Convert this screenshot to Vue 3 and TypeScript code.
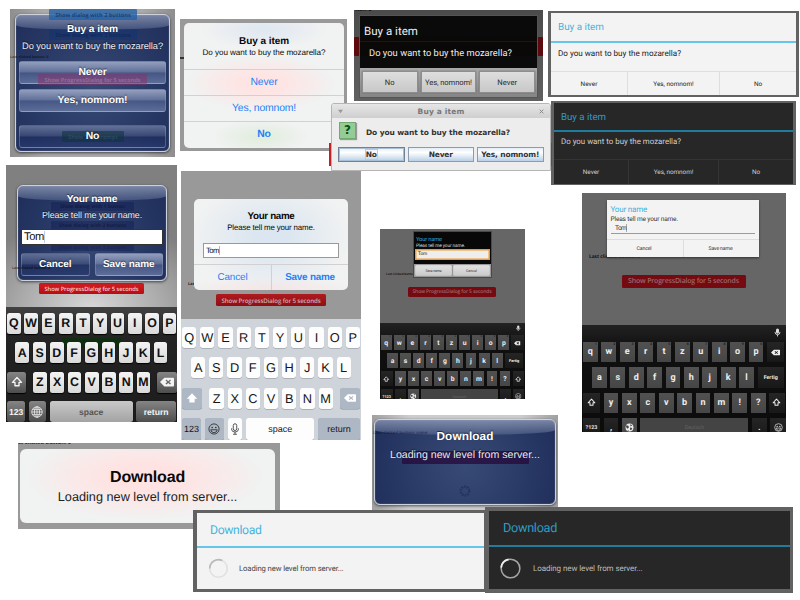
<script setup lang="ts">
import type { Directive } from 'vue'

type Key = { t?: string; icon?: string; c?: string; w?: number; ml?: number; hint?: string }
type Row = { left: number; keys: Key[] }
type Board = { name: string; kw: number; rows: Row[] }

// Tracks a label out or in until it is exactly the given width.
const vFit: Directive<HTMLElement, number> = {
  mounted(el, { value }) {
    const n = (el.textContent ?? '').length
    const current = el.getBoundingClientRect().width
    if (n > 1) {
      el.style.letterSpacing = `${(value - current) / n}px`
    }
  },
}

const letters = (s: string): Key[] => s.split('').map((t) => ({ t }))

const ios6: Board = {
  name: 'ios6',
  kw: 13.7,
  rows: [
    { left: 1, keys: letters('QWERTYUIOP') },
    { left: 9.4, keys: letters('ASDFGHJKL') },
    {
      left: 1,
      keys: [
        { icon: 'shift-line', c: 'fn', w: 19.4 },
        { t: 'Z', ml: 3 },
        ...letters('XCVBNM'),
        { icon: 'erase', c: 'fn', w: 19.6, ml: 3 },
      ],
    },
    {
      left: 1,
      keys: [
        { t: '123', c: 'fn small', w: 18.4 },
        { icon: 'globe', c: 'fn', w: 17 },
        { t: 'space', c: 'space small', w: 83 },
        { t: 'return', c: 'fn small', w: 39.8 },
      ],
    },
  ],
}

const ios7: Board = {
  name: 'ios7',
  kw: 14.3,
  rows: [
    { left: 1, keys: letters('QWERTYUIOP') },
    { left: 10, keys: letters('ASDFGHJKL') },
    {
      left: 1,
      keys: [
        { icon: 'shift-solid', c: 'fn', w: 20 },
        { t: 'Z', ml: 3.5 },
        ...letters('XCVBNM'),
        { icon: 'erase', c: 'fn', w: 20, ml: 3.3 },
      ],
    },
    {
      left: 1,
      keys: [
        { t: '123', c: 'fn small', w: 19 },
        { icon: 'smile', c: 'fn dark', w: 19 },
        { icon: 'mic-line', c: 'dark', w: 14.6 },
        { t: 'space', c: 'small', w: 68.2 },
        { t: 'return', c: 'fn small', w: 41.5 },
      ],
    },
  ],
}

const hinted = 'qwertzuiop'.split('').map((t, i): Key => ({ t, hint: String((i + 1) % 10) }))

const android = (name: string, kw: number, k: number): Board => ({
  name,
  kw,
  rows: [
    { left: k, keys: [...hinted, { icon: 'erase', c: 'fn', w: 17.3 * k }] },
    { left: 10 * k, keys: [...letters('asdfghjkl'), { t: 'Fertig', c: 'fn small', w: 26.3 * k }] },
    {
      left: k,
      keys: [
        { icon: 'shift-line', c: 'fn', w: 17 * k },
        ...letters('yxcvbnm!?'),
        { icon: 'shift-line', c: 'fn', w: 15.7 * k },
      ],
    },
    {
      left: k,
      keys: [
        { t: '?123', c: 'fn small', w: 17 * k },
        { t: ',', c: 'fn' },
        { icon: 'globe-solid' },
        { t: 'Deutsch', c: 'space small', w: 108 * k },
        { t: '.', c: 'fn' },
        { icon: 'smile', c: 'fn', w: 15.7 * k },
      ],
    },
  ],
})

const boards: Record<string, Board> = {
  ios6,
  ios7,
  tablet: android('tablet', 14.8, 1),
  mini: android('mini', 10.9, 0.71),
}
const shots = [
  { board: boards.ios6, cls: 'ask-ios6' },
  { board: boards.ios7, cls: 'ask-ios7' },
  { board: boards.mini, cls: 'ask-mini' },
  { board: boards.tablet, cls: 'ask-tablet' },
]
</script>

<template>
  <main class="canvas">
    <svg class="sprite" width="0" height="0">
      <symbol id="shift-line" viewBox="0 0 16 16">
        <path d="M8 2 14 8.5H10.7V13H5.3V8.5H2Z" fill="none" stroke="currentColor" stroke-width="1.8" stroke-linejoin="round" />
      </symbol>
      <symbol id="shift-solid" viewBox="0 0 16 16">
        <path d="M8 1.5 15 9H11.5V14H4.5V9H1Z" fill="currentColor" />
      </symbol>
      <symbol id="erase" viewBox="0 0 16 16">
        <path fill-rule="evenodd" d="M5 3H15Q16 3 16 4V12Q16 13 15 13H5L0 8ZM7.3 5.2 6.3 6.2 8.2 8 6.3 9.8 7.3 10.8 9.5 9 11.5 10.8 12.5 9.8 10.6 8 12.5 6.2 11.5 5.2 9.5 7Z" fill="currentColor" />
      </symbol>
      <symbol id="globe" viewBox="0 0 16 16">
        <g fill="none" stroke="currentColor" stroke-width="1">
          <circle cx="8" cy="8" r="7" /><ellipse cx="8" cy="8" rx="3.4" ry="7" />
          <path d="M8 1V15M1 8H15M2 4.5H14M2 11.5H14" />
        </g>
      </symbol>
      <symbol id="globe-solid" viewBox="0 0 16 16">
        <circle cx="8" cy="8" r="7" fill="currentColor" />
        <path d="M2 4 6 5 7 8 4 10 2 7ZM9 2 13 4 10 6ZM9 8 13 9 11 13 9 12ZM5 12 7 14H5Z" fill="#444" />
      </symbol>
      <symbol id="smile" viewBox="0 0 16 16">
        <circle cx="8" cy="8" r="6.8" fill="none" stroke="currentColor" stroke-width="1.2" />
        <circle cx="5.6" cy="6" r="1.1" fill="currentColor" /><circle cx="10.4" cy="6" r="1.1" fill="currentColor" />
        <path d="M3.6 9H12.4Q11.5 13 8 13T3.6 9Z" fill="none" stroke="currentColor" stroke-width="1.2" />
      </symbol>
      <symbol id="mic-line" viewBox="0 0 16 16">
        <g fill="none" stroke="currentColor" stroke-width="1.1">
          <rect x="5.7" y="1" width="4.6" height="9" rx="2.3" /><path d="M3.6 7V9Q4 12 8 12T12.4 9V7M8 12V15M5.5 15H10.5" />
        </g>
      </symbol>
      <symbol id="mic" viewBox="0 0 16 16">
        <rect x="5.3" y="1" width="5.4" height="9" rx="2.7" fill="currentColor" />
        <path d="M3.5 7Q4 12 8 12T12.5 7M8 12V15" fill="none" stroke="currentColor" stroke-width="1.6" />
      </symbol>
    </svg>

    <!-- Confirm dialogs -->
    <section class="shot buy-ios6">
      <i class="ghost g1">Show dialog with 2 buttons</i>
      <i class="ghost g2">Show dialog with 3 buttons</i>
      <i class="ghost g3">Show ProgressDialog for 5 seconds</i>
      <i class="ghost g4">Show TextPrompt</i>
      <i class="ghost last">Last clicked button: 0</i>
      <div class="glass">
        <h2><span v-fit="51">Buy a item</span></h2>
        <p><span v-fit="141">Do you want to buy the mozarella?</span></p>
        <div class="gbtn"><span v-fit="28">Never</span></div>
        <div class="gbtn"><span v-fit="70">Yes, nomnom!</span></div>
        <div class="gbtn dim"><span v-fit="13.5">No</span></div>
      </div>
    </section>

    <section class="shot buy-ios7">
      <i class="mark"></i>
      <div class="frost">
        <h2><span v-fit="50">Buy a item</span></h2>
        <p><span v-fit="123">Do you want to buy the mozarella?</span></p>
        <div class="link"><span v-fit="27">Never</span></div>
        <div class="link"><span v-fit="64">Yes, nomnom!</span></div>
        <div class="link strong"><span v-fit="13.5">No</span></div>
      </div>
    </section>

    <section class="shot buy-old">
      <i class="ghost stub">tton: 2</i>
      <i class="ghost band">Show ProgressDialog for 5 seconds</i>
      <div class="old">
        <h2><span v-fit="54">Buy a item</span></h2>
        <p><span v-fit="143">Do you want to buy the mozarella?</span></p>
        <div class="bar">
          <b><span v-fit="10">No</span></b>
          <b><span v-fit="47">Yes, nomnom!</span></b>
          <b><span v-fit="20">Never</span></b>
        </div>
      </div>
    </section>

    <section class="shot buy-light holo">
      <h2><span v-fit="46">Buy a item</span></h2>
      <p><span v-fit="123">Do you want to buy the mozarella?</span></p>
      <div class="bar">
        <b><span v-fit="17">Never</span></b>
        <b><span v-fit="40.5">Yes, nomnom!</span></b>
        <b><span v-fit="8">No</span></b>
      </div>
    </section>

    <section class="shot buy-dark holo night">
      <h2><span v-fit="45">Buy a item</span></h2>
      <p><span v-fit="120">Do you want to buy the mozarella?</span></p>
      <div class="bar">
        <b><span v-fit="16.5">Never</span></b>
        <b><span v-fit="39.5">Yes, nomnom!</span></b>
        <b><span v-fit="8">No</span></b>
      </div>
    </section>
    <i class="shot redline"></i>

    <!-- Text prompts -->
    <section v-for="s in shots" :key="s.cls" class="shot" :class="s.cls">
      <template v-if="s.cls === 'ask-ios6'">
        <i class="ghost g1">Show dialog with 1 button</i>
        <i class="ghost g2">Show dialog with 2 buttons</i>
        <i class="ghost g3">Show dialog with 3 buttons</i>
        <i class="ghost last">Last clicked button: 0</i>
        <div class="glass">
          <h2><span v-fit="50.5">Your name</span></h2>
          <p><span v-fit="100">Please tell me your name.</span></p>
          <div class="field"><span v-fit="21">Tom</span></div>
          <div class="pair">
            <div class="gbtn dim"><span v-fit="32.5">Cancel</span></div>
            <div class="gbtn"><span v-fit="51.5">Save name</span></div>
          </div>
        </div>
        <div class="red"><span v-fit="94">Show ProgressDialog for 5 seconds</span></div>
      </template>
      <template v-else-if="s.cls === 'ask-ios7'">
        <i class="ghost last">Last</i>
        <div class="frost">
          <h2><span v-fit="47">Your name</span></h2>
          <p><span v-fit="87.5">Please tell me your name.</span></p>
          <div class="field"><span v-fit="14">Tom</span></div>
          <div class="pair">
            <div class="link"><span v-fit="30">Cancel</span></div>
            <div class="link strong"><span v-fit="49.5">Save name</span></div>
          </div>
        </div>
        <div class="red"><span v-fit="99">Show ProgressDialog for 5 seconds</span></div>
      </template>
      <template v-else-if="s.cls === 'ask-mini'">
        <i class="ghost last">Last clicked button: 0</i>
        <div class="old">
          <h2><span v-fit="26">Your name</span></h2>
          <p><span v-fit="49">Pleas tell me your name.</span></p>
          <div class="field"><span v-fit="9">Tom</span></div>
          <div class="bar">
            <b><span v-fit="16">Save name</span></b>
            <b><span v-fit="11">Cancel</span></b>
          </div>
        </div>
        <div class="red"><span v-fit="79">Show ProgressDialog for 5 seconds</span></div>
      </template>
      <template v-else>
        <i class="ghost last">Last clicked button: 0</i>
        <div class="holo-box">
          <h2><span v-fit="36.5">Your name</span></h2>
          <p><span v-fit="67.5">Pleas tell me your name.</span></p>
          <div class="field"><span v-fit="12">Tom</span></div>
          <div class="bar">
            <b><span v-fit="15">Cancel</span></b>
            <b><span v-fit="24">Save name</span></b>
          </div>
        </div>
        <div class="red"><span v-fit="111">Show ProgressDialog for 5 seconds</span></div>
      </template>

      <div class="kb" :class="s.board.name">
        <div v-if="s.cls === 'ask-mini' || s.cls === 'ask-tablet'" class="hintbar">
          <svg><use href="#mic" /></svg>
        </div>
        <i v-if="s.cls === 'ask-ios6'" class="greenghost"></i>
        <div v-for="(r, ri) in s.board.rows" :key="ri" class="row" :style="{ paddingLeft: r.left + 'px' }">
          <div
            v-for="(k, ki) in r.keys"
            :key="ki"
            class="key"
            :class="k.c"
            :style="{ width: (k.w ?? s.board.kw) + 'px', marginLeft: (k.ml ?? 0) + 'px' }"
          >
            <svg v-if="k.icon" :class="k.icon"><use :href="'#' + k.icon" /></svg>
            <template v-else>{{ k.t }}</template>
            <sup v-if="k.hint">{{ k.hint }}</sup>
          </div>
        </div>
      </div>
    </section>

    <!-- Progress dialogs -->
    <section class="shot load-ios7">
      <i class="ghost stub">st clicked button: 0</i>
      <div class="frost">
        <h2><span v-fit="75">Download</span></h2>
        <p><span v-fit="179.5">Loading new level from server...</span></p>
      </div>
    </section>

    <section class="shot load-ios6">
      <i class="ghost band"></i>
      <i class="ghost last">Last clicked button: none</i>
      <div class="glass">
        <h2><span v-fit="57">Download</span></h2>
        <p><span v-fit="150">Loading new level from server...</span></p>
        <svg class="dots" viewBox="0 0 12 12"><circle cx="6" cy="6" r="4.3" /></svg>
      </div>
    </section>

    <section class="shot load-light holo">
      <h2><span v-fit="51.5">Download</span></h2>
      <div class="wait">
        <svg viewBox="0 0 22 22">
          <circle cx="11" cy="11" r="9.2" fill="none" stroke="#e0e0e0" stroke-width="1.7" />
          <path d="M1.8 11A9.2 9.2 0 0 1 15 2.7" fill="none" stroke="#b9b9b9" stroke-width="1.7" />
        </svg>
        <span v-fit="104.5">Loading new level from server...</span>
      </div>
    </section>

    <section class="shot load-dark holo night">
      <h2><span v-fit="54">Download</span></h2>
      <div class="wait">
        <svg viewBox="0 0 22 22">
          <circle cx="11" cy="11" r="9.8" fill="none" stroke="#a5a5a5" stroke-width="1.6" />
          <path d="M1.2 10A9.8 9.8 0 0 1 9 1.4" fill="none" stroke="#eee" stroke-width="1.7" />
        </svg>
        <span v-fit="109.5">Loading new level from server...</span>
      </div>
    </section>

    <section class="shot swing">
      <header>
        <svg viewBox="0 0 6 4"><path d="M0 0H6L3 4Z" fill="#999" /></svg>
        <span v-fit="47">Buy a item</span>
        <svg viewBox="0 0 6 6"><path d="M.8.8 5.2 5.2M5.2.8.8 5.2" stroke="#888" stroke-width="1.2" /></svg>
      </header>
      <div class="ask"><em>?</em><span v-fit="144">Do you want to buy the mozarella?</span></div>
      <div class="btns">
        <b class="on"><span v-fit="11">No</span></b>
        <b><span v-fit="24">Never</span></b>
        <b><span v-fit="58">Yes, nomnom!</span></b>
      </div>
    </section>
  </main>
</template>

<style>
body {
  margin: 0;
  background: #fff;
}
</style>

<style scoped>
.canvas {
  position: relative;
  width: 800px;
  height: 600px;
  overflow: hidden;
  background: #fff;
  font-family: 'Liberation Sans', sans-serif;
  text-rendering: geometricPrecision;
}
.canvas * {
  box-sizing: border-box;
}
.sprite {
  position: absolute;
}
.shot {
  position: absolute;
  overflow: hidden;
  display: flex;
  flex-direction: column;
}
h2,
p {
  margin: 0;
  display: flex;
  align-items: center;
  flex: none;
  white-space: nowrap;
}
span {
  white-space: nowrap;
  flex: none;
}
.ghost {
  position: absolute;
  display: flex;
  align-items: center;
  justify-content: center;
  font: bold 5.6px 'Open Sans', sans-serif;
  white-space: nowrap;
  border-radius: 1px;
}

/* iOS 6 glass dialogs */
.glass {
  position: relative;
  display: flex;
  flex-direction: column;
  align-items: center;
  border: 1px solid #cdd1db;
  border-radius: 6px;
  background: radial-gradient(circle at 50% 55%, rgba(47, 67, 112, 0.95), rgba(26, 41, 88, 0.96));
  box-shadow: 0 1px 3px rgba(0, 0, 0, 0.6), inset 0 0 1px #aab2c6;
  color: #fff;
  text-shadow: 0 -1px 1px rgba(0, 0, 0, 0.6);
}
.glass::before {
  content: '';
  position: absolute;
  inset: 0 0 auto;
  height: 15px;
  border-radius: 4px 4px 50% 50% / 4px 4px 5px 5px;
  background: linear-gradient(rgba(180, 190, 214, 0.6), rgba(125, 141, 176, 0.3));
}
.glass > * {
  position: relative;
}
.glass p {
  color: #e9ecf4;
}
.gbtn {
  display: flex;
  flex: none;
  align-items: center;
  justify-content: center;
  height: 23px;
  width: 147px;
  border-radius: 3px;
  font: bold 10.4px 'Liberation Sans', sans-serif;
  border: 1px solid rgba(150, 162, 195, 0.4);
  background: linear-gradient(rgba(165, 176, 205, 0.85), rgba(108, 124, 164, 0.8) 49%, rgba(78, 96, 144, 0.75) 51%, rgba(110, 126, 168, 0.75));
}
.gbtn.dim {
  background: linear-gradient(rgba(120, 134, 170, 0.7), rgba(66, 82, 126, 0.6) 49%, rgba(28, 44, 94, 0.6) 51%, rgba(40, 58, 112, 0.6));
}
.buy-ios6 {
  left: 10px;
  top: 9px;
  width: 165px;
  height: 148px;
  padding: 5px;
  background: linear-gradient(90deg, #8e8e8e, #aaa 20%, #aaa 80%, #8e8e8e);
}
.buy-ios6 .glass {
  height: 139px;
}
.buy-ios6 h2 {
  height: 18px;
  margin-top: 5px;
  font-size: 10.2px;
}
.buy-ios6 p {
  height: 16px;
  margin-bottom: 7px;
  font-size: 9.3px;
}
.buy-ios6 .gbtn + .gbtn {
  margin-top: 5px;
}
.buy-ios6 .gbtn.dim {
  margin-top: 13px !important;
}
.buy-ios6 .ghost {
  z-index: 1;
}
.buy-ios6 .g1 {
  left: 39px;
  top: 0;
  width: 88px;
  height: 11px;
  background: rgba(30, 95, 165, 0.75);
  color: rgba(15, 55, 110, 0.8);
}
.buy-ios6 .g2 {
  left: 39px;
  top: 20px;
  width: 88px;
  height: 11px;
  background: rgba(13, 50, 115, 0.45);
  color: rgba(10, 32, 80, 0.6);
}
.buy-ios6 .g3 {
  left: 28px;
  top: 65px;
  width: 109px;
  height: 11px;
  background: rgba(140, 45, 105, 0.5);
  color: rgba(190, 160, 195, 0.4);
}
.buy-ios6 .g4 {
  left: 52px;
  top: 122px;
  width: 62px;
  height: 11px;
  background: rgba(16, 52, 64, 0.6);
  color: rgba(60, 85, 105, 0.6);
}
.buy-ios6 .last {
  left: 0;
  top: 46px;
  font-size: 3.6px;
  color: rgba(0, 0, 0, 0.55);
}
.buy-ios6 h2 span,
.buy-ios6 .gbtn span,
.buy-ios6 p span {
  position: relative;
  z-index: 2;
}
.buy-ios6 .glass {
  z-index: auto;
}
.buy-ios6 .glass > * {
  z-index: auto;
}

/* iOS 7 frosted dialogs */
.frost {
  display: flex;
  flex-direction: column;
  align-items: center;
  border-radius: 5px;
  color: #080808;
  background-color: #f1f2f2;
  position: relative;
}
.link {
  display: flex;
  align-items: center;
  justify-content: center;
  align-self: stretch;
  flex: none;
  border-top: 1px solid #d3d0d2;
  color: #1f80f5;
  font-size: 10.4px;
}
.strong {
  font-weight: bold;
}
.buy-ios7 {
  left: 180px;
  top: 19px;
  width: 167px;
  height: 132px;
  padding: 4px 3px 3px 4px;
  background: #999;
}
.buy-ios7 .mark {
  position: absolute;
  left: 0;
  top: 38px;
  width: 5px;
  height: 2px;
  background: #333;
}
.buy-ios7 .frost {
  height: 125px;
  background-image:
    radial-gradient(ellipse 65px 20px at 50% 5%, #dfe7f1, transparent),
    radial-gradient(ellipse 75px 27px at 48% 48%, #ffe4e4 30%, transparent),
    radial-gradient(ellipse 48px 17px at 48% 91%, #e3eee0 20%, transparent);
}
.buy-ios7 h2 {
  height: 14px;
  margin-top: 11px;
  font-size: 10px;
}
.buy-ios7 p {
  height: 9px;
  font-size: 8.1px;
  margin-bottom: 12px;
}
.buy-ios7 .link {
  height: 26px;
}

/* Android 2 dialogs */
.bar {
  display: flex;
  flex: none;
}
.bar b {
  display: flex;
  align-items: center;
  justify-content: center;
  font-weight: normal;
}
.buy-old {
  left: 354px;
  top: 10px;
  width: 189px;
  height: 91px;
  padding: 5px 5px 3px;
  background: linear-gradient(#4b4b4b, #606060);
  font-family: Roboto, sans-serif;
}
.buy-old .old {
  position: relative;
  height: 83px;
  background: rgba(8, 8, 8, 0.97);
  border: 1px solid #555;
  color: #eee;
}
.buy-old h2 {
  height: 26px;
  padding: 4px 0 0 4px;
  font-size: 11.5px;
  font-weight: normal;
  border-bottom: 1px solid #181818;
}
.buy-old p {
  height: 26px;
  padding: 0 0 3px 9px;
  font-size: 9.3px;
}
.buy-old .bar {
  height: 29px;
  gap: 3px;
  padding: 3px 2px 4px;
  background: linear-gradient(#a9a9a9, #858585);
}
.buy-old .bar b {
  width: 56px;
  height: 22px;
  border: 1px solid #8e8e8e;
  background: linear-gradient(#dedede, #c8c8c8);
  box-shadow: 0 0 1px #555;
  color: #2b2b2b;
  font-size: 7.6px;
}
.buy-old .band {
  left: 0;
  top: 27px;
  width: 189px;
  height: 19px;
  background: #5c0a0d;
}
.buy-old .stub {
  left: 1px;
  top: -2px;
  font-size: 5px;
  line-height: 5px;
  color: #111;
}

/* Holo dialogs */
.holo {
  font-family: Roboto, sans-serif;
  background: #f3f3f3;
  color: #222;
  border: solid #626262;
}
.holo h2 {
  font-weight: normal;
  color: #45b5df;
  border-bottom: 2px solid #66c5ea;
}
.holo.night {
  background: #272727;
  color: #d0d0d0;
}
.holo.night h2 {
  color: #2f9ac4;
  border-bottom-color: #207c9d;
}
.holo .bar {
  border-top: 1px solid #dedede;
  flex: 1;
}
.holo .bar b + b {
  border-left: 1px solid #dedede;
}
.holo.night .bar,
.holo.night .bar b + b {
  border-color: #343434;
}
.buy-light {
  left: 548px;
  top: 11px;
  width: 251px;
  height: 86px;
  border-width: 2px 3px 2px;
}
.buy-light h2 {
  height: 30px;
  padding: 1px 7px 0;
  font-size: 9.9px;
}
.buy-light p {
  height: 28px;
  padding: 0 7px 9px;
  font-size: 8.1px;
}
.holo .bar b {
  font-size: 6.4px;
}
.buy-light .bar b:nth-child(1) {
  width: 76px;
}
.buy-light .bar b:nth-child(2) {
  width: 92px;
}
.buy-light .bar b:nth-child(3) {
  width: 77px;
}
.buy-dark {
  left: 551px;
  top: 101px;
  width: 245px;
  height: 84px;
  border-width: 2px 3px 1px;
}
.buy-dark h2 {
  height: 29px;
  padding: 1px 7px 0;
  font-size: 9.7px;
}
.buy-dark p {
  height: 27px;
  padding: 0 7px 8px;
  font-size: 7.9px;
}
.buy-dark .bar b:nth-child(1) {
  width: 74px;
}
.buy-dark .bar b:nth-child(2) {
  width: 90px;
}
.buy-dark .bar b:nth-child(3) {
  width: 75px;
}

/* Swing dialog */
.redline {
  left: 329px;
  top: 143px;
  width: 223px;
  height: 23px;
  background: #c41f25;
}
.swing {
  left: 331px;
  top: 103px;
  width: 220px;
  height: 68px;
  border: 1px solid #b5b5b5;
  border-radius: 3px 3px 0 0;
  background: #ededed;
  font: bold 7.5px 'DejaVu Sans', sans-serif;
  color: #333;
}
.swing header {
  display: flex;
  align-items: center;
  justify-content: space-between;
  height: 14px;
  padding: 0 6px;
  background: linear-gradient(#e6e6e6, #cfcfcf);
  color: #777;
}
.swing header svg {
  width: 5px;
  height: 5px;
}
.ask {
  display: flex;
  align-items: center;
  gap: 10px;
  height: 29px;
  padding: 0 7px;
}
.ask em {
  width: 17px;
  height: 17px;
  margin-top: -4px;
  border: 1px solid #71a971;
  box-shadow: 1px 1px 1px #999;
  background: #95cb95;
  color: #0b4d12;
  font: bold 12px/15px 'DejaVu Sans', sans-serif;
  text-align: center;
}
.ask span {
  margin-top: -1px;
}
.btns {
  display: flex;
  gap: 3px;
  padding-left: 6px;
}
.btns b {
  display: flex;
  align-items: center;
  justify-content: center;
  width: 66.5px;
  height: 15px;
  border: 1px solid #8b9dad;
  background: linear-gradient(#e3edf6, #fff 35%, #b9d0e6);
}
.btns .on {
  border-color: #6d8296;
  box-shadow: inset 0 0 0 1px #a9bfd5;
}
.btns .on span {
  outline: 1px solid #b9cbe0;
}

/* Prompt screens */
.red {
  display: flex;
  flex: none;
  align-items: center;
  justify-content: center;
  align-self: center;
  border-radius: 1.5px;
  background: linear-gradient(#d51d22, #b90c12);
  color: #f2caca;
  font-family: 'Open Sans', sans-serif;
  font-weight: 600;
}
.field {
  flex: none;
  display: flex;
  align-items: center;
  background: #fff;
  color: #111;
  text-shadow: none;
}
.pair {
  display: flex;
  flex: none;
}
.ask-ios6 {
  left: 6px;
  top: 165px;
  width: 171px;
  height: 257px;
  padding-top: 20px;
  background: radial-gradient(ellipse 130px 90px at 50% 56%, #d8d8d8, #aaa 55%, #808080);
}
.ask-ios6 .glass {
  flex: none;
  width: 150px;
  height: 96px;
  margin: 0 auto 2px 11px;
}
.ask-ios6 h2 {
  height: 17px;
  margin-top: 5px;
  font-size: 10.2px;
}
.ask-ios6 p {
  height: 14px;
  margin-bottom: 7px;
  font-size: 8.9px;
}
.ask-ios6 .field {
  width: 142px;
  height: 16px;
  padding-left: 2px;
  border: 1px solid #333;
  font-size: 11.2px;
  margin-bottom: 8px;
}
.ask-ios6 .field span {
  border-right: 1px solid #b7cdf0;
}
.ask-ios6 .pair {
  gap: 5px;
}
.ask-ios6 .gbtn {
  width: 68.5px;
  font-size: 10px;
}
.ask-ios6 .red {
  width: 105px;
  height: 11px;
  font-size: 5.8px;
  margin-bottom: 13px;
}
.ask-ios6 .ghost {
  z-index: 1;
  left: 45px;
  width: 83px;
  height: 9px;
  font-size: 5px;
  background: rgba(12, 26, 80, 0.4);
  color: rgba(10, 15, 50, 0.6);
}
.ask-ios6 .g1 {
  top: 37px;
}
.ask-ios6 .g2 {
  top: 56px;
}
.ask-ios6 .ghost.g3 {
  top: 80px;
  height: 6px;
  color: rgba(10, 15, 50, 0.3);
}
.ask-ios6 .ghost.last {
  left: 6px;
  top: 99px;
  width: auto;
  background: none;
  font-size: 3.6px;
  color: rgba(0, 0, 0, 0.6);
}
.ask-ios6 .glass > * {
  z-index: auto;
}
.ask-ios6 .glass span,
.ask-ios6 .field {
  position: relative;
  z-index: 2;
}
.kb {
  position: relative;
  flex: 1;
  display: flex;
  flex-direction: column;
}
.row {
  display: flex;
  flex: none;
}
.key {
  position: relative;
  display: flex;
  flex: none;
  align-items: center;
  justify-content: center;
}
.kb svg {
  width: 12px;
  height: 12px;
}
.kb.ios6 {
  padding-top: 6px;
  gap: 8.7px;
  background: linear-gradient(#414141, #242424 25%, #1c1c1c);
}
.ios6 .row {
  height: 20.8px;
  gap: 3.6px;
}
.ios6 .key {
  border-radius: 2.5px;
  background: linear-gradient(#f4f4f4, #d9d9d9);
  box-shadow: 0 1px 1px #000;
  color: #111;
  font-weight: bold;
  font-size: 12.4px;
}
.ios6 .key.fn {
  background: linear-gradient(#858585, #4d4d4d);
  color: #f3f3f3;
}
.ios6 .key.space {
  background: linear-gradient(#c9c9c9, #a3a3a3);
  color: #555;
}
.ios6 .key.small {
  font-size: 8.6px;
}
.ios6 svg.erase {
  width: 14px;
  height: 14px;
}
.greenghost {
  position: absolute;
  left: 56px;
  top: 31px;
  width: 60px;
  height: 10px;
  background: #102d12;
}
.ask-ios7 {
  left: 181px;
  top: 171px;
  width: 180px;
  height: 269px;
  padding-top: 28px;
  background: #999;
}
.ask-ios7 .frost {
  flex: none;
  width: 154px;
  height: 91px;
  margin-left: 13px;
  margin-bottom: 4px;
  background-image:
    radial-gradient(ellipse 80px 55px at 50% 42%, #dbe6f0 20%, transparent),
    radial-gradient(ellipse 90px 12px at 50% 100%, #f8e4e4, transparent);
}
.ask-ios7 h2 {
  height: 13px;
  margin-top: 11px;
  font-size: 9.8px;
}
.ask-ios7 p {
  height: 9px;
  margin-bottom: 11px;
  font-size: 7.9px;
}
.ask-ios7 .field {
  width: 136px;
  height: 15px;
  margin-bottom: 6px;
  padding-left: 2px;
  border: 1px solid #999;
  font-size: 7.8px;
}
.ask-ios7 .field span {
  border-right: 1px solid #9dbdf0;
}
.ask-ios7 .pair {
  width: 154px;
}
.ask-ios7 .link {
  width: 77px;
  height: 26px;
  font-size: 9.9px;
}
.ask-ios7 .link + .link {
  border-left: 1px solid #d3d0d2;
}
.ask-ios7 .red {
  width: 110px;
  height: 12px;
  margin-bottom: 13px;
  background: linear-gradient(#b01a1e, #8e0f14);
  color: #ccb0b0;
  font-size: 6.2px;
}
.ask-ios7 .last {
  left: 7px;
  top: 111px;
  font-size: 4px;
  color: #222;
}
.kb.ios7 {
  padding-top: 7.5px;
  gap: 9.3px;
  background: #cfd3da;
}
.ios7 .row {
  height: 21.3px;
  gap: 3.9px;
}
.ios7 .key {
  border-radius: 2.5px;
  background: #fdfdfd;
  box-shadow: 0 0.6px 0.6px #888c93;
  color: #161616;
  font-size: 12.8px;
}
.ios7 .key.fn {
  background: #aeb7c4;
}
.ios7 .key.fn svg {
  color: #fff;
}
.ios7 .key.dark svg {
  color: #333;
}
.ios7 .key.small {
  font-size: 9px;
}

/* Android keyboards */
.ask-mini,
.ask-tablet {
  font-family: Roboto, sans-serif;
  background: #666;
}
.ask-mini {
  left: 380px;
  top: 229px;
  width: 145px;
  height: 170px;
  padding-top: 2px;
}
.ask-mini .old {
  position: relative;
  flex: none;
  width: 79px;
  height: 47px;
  margin-left: 33px;
  margin-bottom: 9px;
  padding-top: 4px;
  border: 1px solid #494949;
  background: #080808;
  color: #ddd;
}
.ask-mini h2 {
  height: 7px;
  padding-left: 2px;
  font-size: 5.8px;
  font-weight: normal;
  color: #2fa4ce;
}
.ask-mini p {
  height: 6px;
  padding-left: 2px;
  font-size: 4.7px;
}
.ask-mini .field {
  width: 75px;
  height: 11px;
  margin-left: 1px;
  padding-left: 2px;
  border: 1px solid #f19a2c;
  box-shadow: inset 0 0 0 0.5px #f19a2c;
  font-size: 4.8px;
  margin-bottom: 4px;
  background: #eee;
}
.ask-mini .bar {
  height: 13px;
  padding: 1px;
  gap: 1px;
  background: #999;
}
.ask-mini .bar b {
  width: 37px;
  height: 11px;
  border-radius: 1px;
  background: linear-gradient(#e2e2e2, #c9c9c9);
  box-shadow: inset 0 0 1px #777;
  color: #333;
  font-size: 3.6px;
}
.ask-mini .red {
  width: 88px;
  height: 10px;
  margin-right: 1px;
  margin-bottom: 26px;
  background: #750a10;
  color: #9c686b;
  font-size: 5px;
}
.ask-mini .ghost.last {
  left: 6px;
  top: 43px;
  font-size: 3px;
  color: #181818;
}
.kb.mini {
  gap: 2.9px;
  background: linear-gradient(#222, #101010 25%, #0c0c0c);
}
.hintbar {
  display: flex;
  flex: none;
  align-items: center;
  justify-content: flex-end;
  color: #ddd;
}
.mini .hintbar {
  height: 9.6px;
  padding-right: 3.5px;
}
.kb.mini svg {
  width: 6.5px;
  height: 6.5px;
}
.mini .row {
  height: 15px;
  gap: 2.2px;
}
.mini .key,
.tablet .key {
  background: linear-gradient(#515151, #464646);
  color: #eee;
  font-weight: bold;
}
.mini .key {
  font-size: 6.8px;
}
.mini .key.fn,
.tablet .key.fn {
  background: linear-gradient(#252525, #181818);
}
.mini .key.small {
  font-size: 3.8px;
}
.mini .key.space,
.tablet .key.space {
  background: #444;
  color: #626262;
  font-weight: normal;
}
sup {
  position: absolute;
  right: 1px;
  top: 0;
  font-size: 3.6px;
  line-height: 5px;
  color: #1d1d1d;
}
.mini sup {
  font-size: 2.6px;
  line-height: 3px;
}
.ask-tablet {
  left: 582px;
  top: 193px;
  width: 204px;
  height: 239px;
  padding-top: 7px;
}
.holo-box {
  position: relative;
  flex: none;
  width: 152px;
  height: 57px;
  margin-left: 25px;
  margin-bottom: 18px;
  padding-top: 4px;
  background: #f3f3f3;
  box-shadow: 0 1px 2px #333;
  color: #333;
}
.holo-box h2 {
  height: 10px;
  padding-left: 3.5px;
  font-size: 8px;
  font-weight: normal;
  color: #3fb2de;
}
.holo-box p {
  height: 9px;
  padding-left: 3.5px;
  font-size: 6.5px;
}
.holo-box .field {
  height: 11px;
  width: 144px;
  margin: 0 4px 5px;
  padding-left: 4px;
  border-bottom: 1px solid #45b9e4;
  background: none;
  color: #333;
  font-size: 6.6px;
}
.holo-box .field span {
  border-right: 1px solid #aaa;
}
.holo-box .bar {
  height: 18px;
  border-top: 1px solid #ddd;
}
.holo-box .bar b {
  width: 76px;
  font-size: 5.2px;
  padding-right: 2px;
}
.holo-box .bar b + b {
  border-left: 1px solid #ddd;
}
.ask-tablet .red {
  width: 124px;
  height: 13px;
  margin-bottom: 37px;
  margin-right: 1px;
  background: #750a10;
  color: #9c686b;
  font-size: 7px;
}
.ask-tablet .last {
  left: 7px;
  top: 61px;
  font-size: 4.8px;
  color: #111;
}
.kb.tablet {
  gap: 4.9px;
  background: linear-gradient(#222, #101010 20%, #0b0b0b);
}
.tablet .hintbar {
  height: 12.3px;
  padding: 3px 4px 0 0;
}
.kb.tablet svg {
  width: 9px;
  height: 9px;
}
.tablet .row {
  height: 20.3px;
  gap: 3.6px;
}
.tablet .key {
  font-size: 9px;
}
.tablet .key.small {
  font-size: 5.3px;
}

/* Progress */
.load-ios7 {
  left: 18px;
  top: 443px;
  width: 262px;
  height: 86px;
  padding: 6px 5px 6px 2px;
  background: #999;
}
.load-ios7 .stub {
  left: 0;
  top: -3px;
  font-size: 5.6px;
  line-height: 5px;
  color: #222;
}
.load-ios7 .frost {
  height: 74px;
  border-radius: 6px;
  background-image: radial-gradient(ellipse 120px 42px at 49% 38%, #ffe3e2 30%, transparent);
}
.load-ios7 h2 {
  height: 20px;
  margin-top: 19px;
  font-size: 16px;
}
.load-ios7 p {
  height: 17px;
  font-size: 12.7px;
  color: #222;
}
.load-ios6 {
  left: 372px;
  top: 415px;
  width: 186px;
  height: 95px;
  padding: 4px 2px 5px;
  background: linear-gradient(90deg, #a0a0a0, #ccc 20%, #ccc 80%, #a0a0a0);
}
.load-ios6 .glass {
  height: 86px;
}
.load-ios6 h2 {
  height: 18px;
  margin-top: 7px;
  font-size: 11.8px;
}
.load-ios6 p {
  height: 17px;
  margin: 1px 0 22px;
  font-size: 10.6px;
}
.load-ios6 .band {
  z-index: 1;
  left: 30px;
  top: 36px;
  width: 127px;
  height: 13px;
  background: rgba(38, 8, 58, 0.75);
}
.load-ios6 .last {
  z-index: 1;
  left: 1px;
  top: 15px;
  font-size: 4.3px;
  color: rgba(0, 0, 20, 0.4);
}
.load-ios6 .glass > * {
  z-index: auto;
}
.load-ios6 .glass span {
  position: relative;
  z-index: 2;
}
.dots {
  width: 12px;
  height: 12px;
}
.dots circle {
  fill: none;
  stroke: #22345f;
  stroke-width: 2.4;
  stroke-dasharray: 1.6 1.1;
}
.load-light {
  left: 193px;
  top: 510px;
  width: 294px;
  height: 82px;
  border-width: 3px 3px 3px 4px;
}
.load-light h2 {
  height: 35px;
  padding: 0 13px;
  font-size: 12.2px;
}
.load-dark {
  left: 485px;
  top: 507px;
  width: 308px;
  height: 86px;
  border-width: 4px 3px 4px 4px;
}
.load-dark h2 {
  height: 36px;
  padding: 0 14px;
  font-size: 12.7px;
}
.wait {
  display: flex;
  align-items: center;
  gap: 10px;
  padding-left: 11px;
  height: 42px;
  font-size: 7.7px;
  color: #444;
}
.wait svg {
  width: 21px;
  height: 21px;
}
.holo.night .wait {
  height: 43px;
  gap: 12px;
  font-size: 8px;
  color: #bbb;
}
</style>
